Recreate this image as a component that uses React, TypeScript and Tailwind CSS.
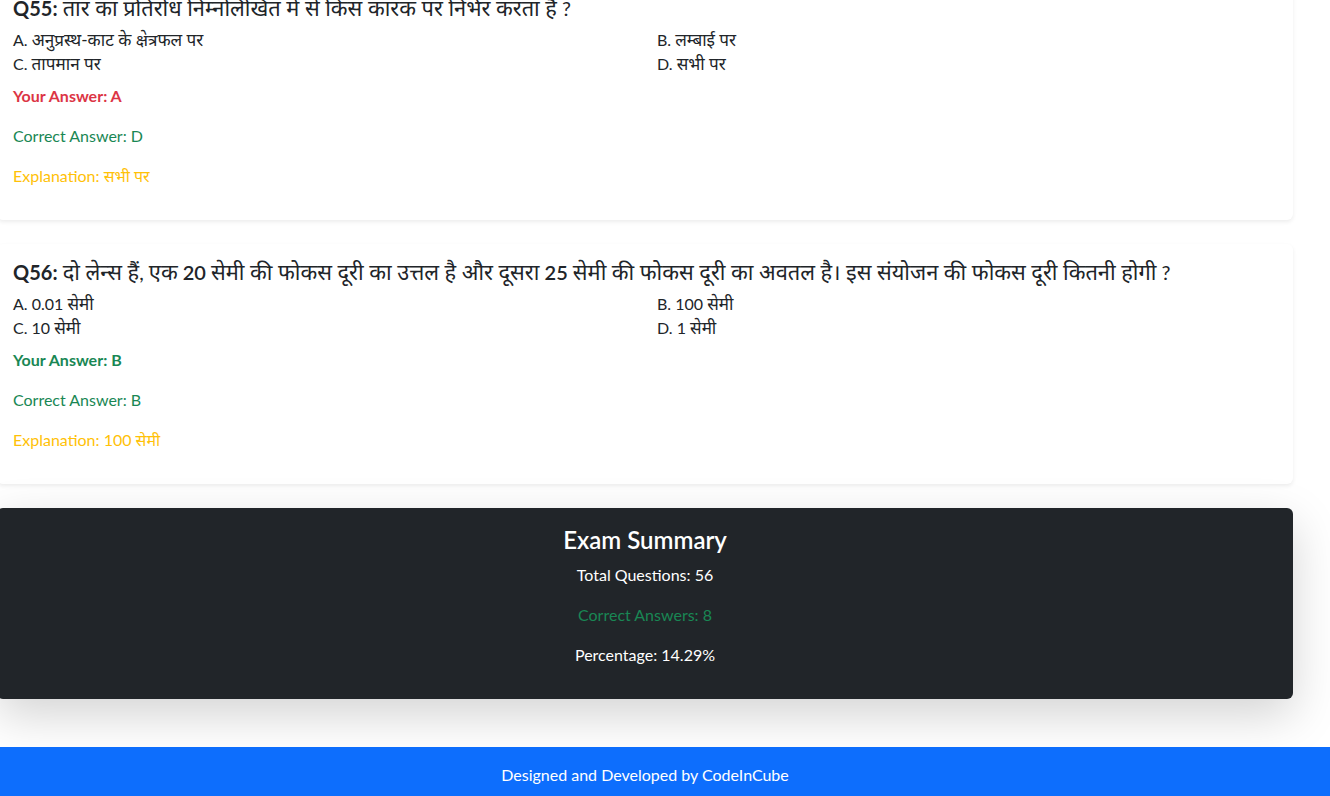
import React from 'react';

interface Question {
  no: number;
  title: React.ReactNode;
  options: string[];
  yourAnswer: string;
  correct: string;
  explanation: string;
}

// Devanagari runs get a touch more size so they sit like the original font
const Hi: React.FC<{ text: string; big?: boolean }> = ({ text, big }) => {
  const parts = text.split(/([\u0900-\u097F][\u0900-\u097F\s-]*[\u0900-\u097F]|[\u0900-\u097F])/);
  return (
    <>
      {parts.map((p, i) =>
        /[\u0900-\u097F]/.test(p) ? (
          <span key={i} className={big ? 'text-[1.09em]' : 'text-[1.07em]'}>
            {p}
          </span>
        ) : (
          <React.Fragment key={i}>{p}</React.Fragment>
        )
      )}
    </>
  );
};

const questions: Question[] = [
  {
    no: 55,
    title: <Hi big text="तार का प्रतिरोध निम्नलिखित में से किस कारक पर निर्भर करता है ?" />,
    options: ['A. अनुप्रस्थ-काट के क्षेत्रफल पर', 'B. लम्बाई पर', 'C. तापमान पर', 'D. सभी पर'],
    yourAnswer: 'A',
    correct: 'D',
    explanation: 'सभी पर',
  },
  {
    no: 56,
    title: (
      <>
        <Hi big text="दो लेन्स हैं, एक " />
        <span className="font-semibold">20</span> <Hi big text="सेमी की फोकस दूरी का उत्तल है और दूसरा " />
        <span className="font-semibold">25</span>{' '}
        <Hi big text="सेमी की फोकस दूरी का अवतल है। इस संयोजन की फोकस दूरी कितनी होगी ?" />
      </>
    ),
    options: ['A. 0.01 सेमी', 'B. 100 सेमी', 'C. 10 सेमी', 'D. 1 सेमी'],
    yourAnswer: 'B',
    correct: 'B',
    explanation: '100 सेमी',
  },
];

const QuestionCard: React.FC<{ q: Question }> = ({ q }) => {
  const isRight = q.yourAnswer === q.correct;
  return (
    <div className="mb-6 rounded-md bg-white p-4 shadow-[0_2px_4px_rgba(0,0,0,0.075)]">
      <h5 className="mb-2 text-[20px] leading-6 text-[#212529]">
        <strong className="font-bold">Q{q.no}:</strong> {q.title}
      </h5>
      <div className="mb-2 grid grid-cols-2 gap-x-6 text-[16px] leading-6 text-[#212529]">
        {q.options.map((o) => (
          <div key={o}>
            <Hi text={o} />
          </div>
        ))}
      </div>
      <p className={'mb-4 text-[16px] font-bold leading-6 ' + (isRight ? 'text-[#198754]' : 'text-[#dc3545]')}>
        Your Answer: {q.yourAnswer}
      </p>
      <p className="mb-4 text-[16px] leading-6 text-[#198754]">Correct Answer: {q.correct}</p>
      <p className="mb-4 text-[16px] leading-6 text-[#ffc107]">Explanation: {q.explanation}</p>
    </div>
  );
};

export default function App() {
  return (
    <div className="min-h-[796px] overflow-hidden bg-white" style={{ fontFamily: 'Lato, "Noto Sans", sans-serif' }}>
      <div className="-mt-5 -ml-[3px] w-[1296px]">
        {questions.map((q) => (
          <QuestionCard key={q.no} q={q} />
        ))}
        <div className="rounded-md bg-[#212529] p-4 text-center text-white shadow-[0_16px_48px_rgba(0,0,0,0.175)]">
          <h4 className="mb-2 text-[24px] font-semibold leading-[31px]">Exam Summary</h4>
          <p className="mb-4 text-[16px] leading-6">Total Questions: 56</p>
          <p className="mb-4 text-[16px] leading-6 text-[#198754]">Correct Answers: 8</p>
          <p className="mb-4 text-[16px] leading-6">Percentage: 14.29%</p>
        </div>
      </div>
      <footer className="mt-12 bg-[#0d6efd] py-4 pb-8 pr-10 text-center text-[16px] leading-6 text-white">
        Designed and Developed by CodeInCube
      </footer>
    </div>
  );
}
